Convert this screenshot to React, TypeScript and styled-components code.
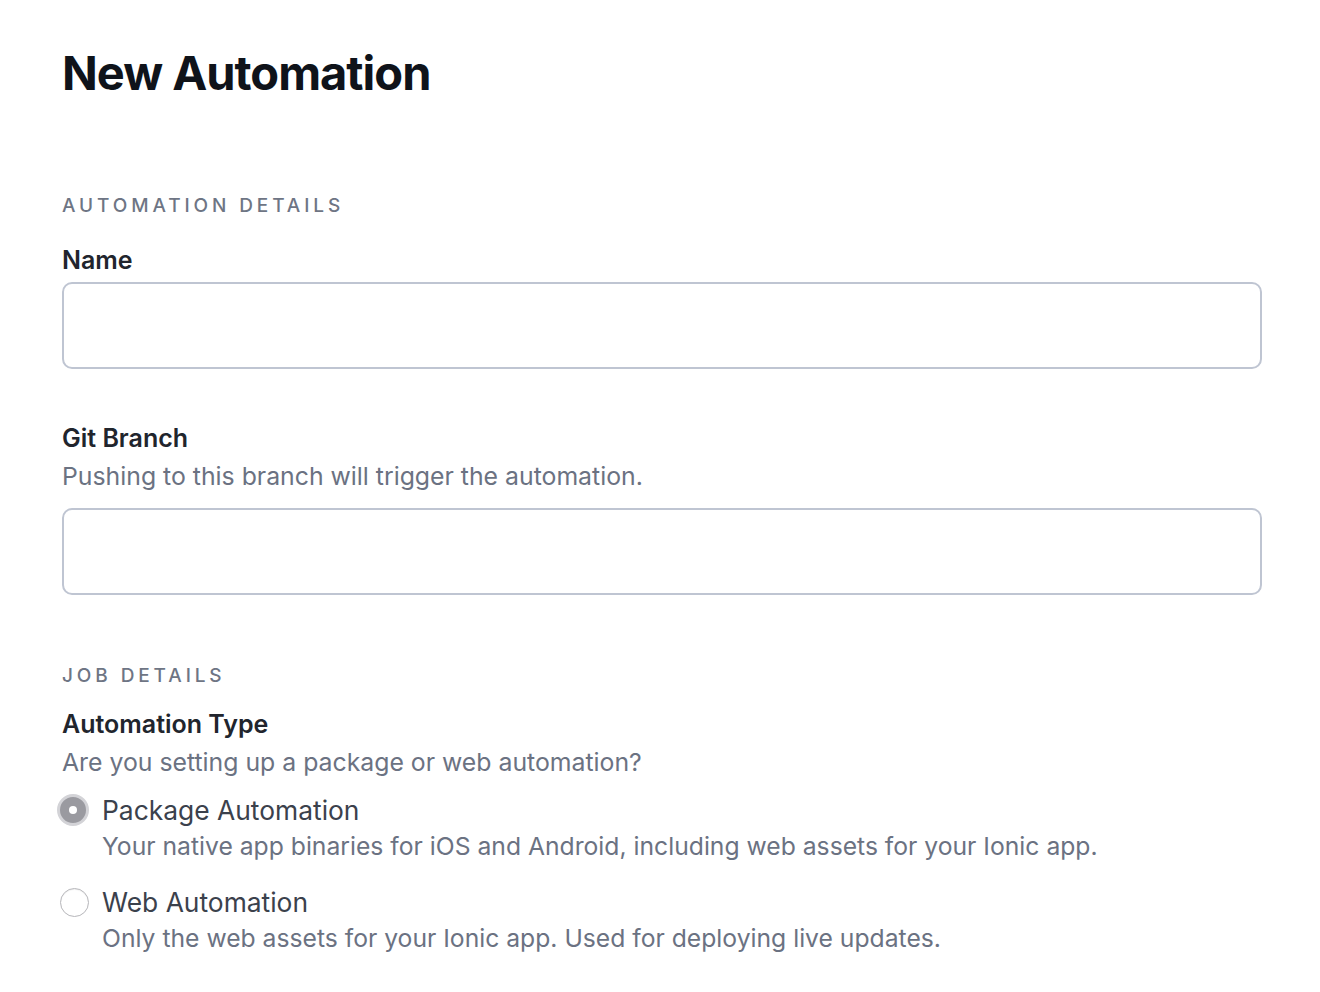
import React from "react";
import styled, { createGlobalStyle } from "styled-components";

const GlobalStyle = createGlobalStyle`
  body {
    margin: 0;
    background: #ffffff;
    font-family: Inter, "Noto Sans", sans-serif;
    -webkit-font-smoothing: antialiased;
  }
`;

const Page = styled.div`
  padding: 40px 58px 0 62px;
  width: 1200px;
`;

const Title = styled.h1`
  margin: 0 0 86px;
  font-size: 47px;
  line-height: 66px;
  font-weight: 700;
  letter-spacing: -1px;
  color: #0f131a;
`;

const SectionLabel = styled.h2<{ space?: number }>`
  margin: 0 0 ${({ space }) => space ?? 17}px;
  font-size: 19px;
  line-height: 28px;
  font-weight: 500;
  letter-spacing: 3.9px;
  text-transform: uppercase;
  color: #6e7584;
`;

const Field = styled.div<{ gap?: number }>`
  display: flex;
  flex-direction: column;
  margin-bottom: ${({ gap }) => gap ?? 0}px;
`;

const Label = styled.label`
  font-size: 25px;
  line-height: 34px;
  font-weight: 600;
  color: #21252d;
`;

const Help = styled.p`
  margin: 5px 0 0;
  font-size: 24.8px;
  line-height: 32px;
  color: #6b7282;
`;

const Input = styled.input<{ top?: number }>`
  box-sizing: border-box;
  width: 100%;
  height: 87px;
  margin-top: ${({ top }) => top ?? 5}px;
  border: 2px solid #bfc5d2;
  border-radius: 10px;
  background: #fff;
  font: inherit;
  font-size: 24px;
  padding: 0 20px;
  outline: none;
`;

const Options = styled.div`
  display: flex;
  flex-direction: column;
  gap: 22px;
  margin-top: 14px;
`;

const Option = styled.label`
  display: grid;
  grid-template-columns: 30px 1fr;
  column-gap: 10px;
  align-items: start;
`;

const Radio = styled.span<{ checked?: boolean }>`
  box-sizing: border-box;
  width: ${({ checked }) => (checked ? 32 : 29)}px;
  height: ${({ checked }) => (checked ? 32 : 29)}px;
  margin-top: ${({ checked }) => (checked ? 2 : 3.5)}px;
  margin-left: ${({ checked }) => (checked ? -5 : -2.5)}px;
  border-radius: 50%;
  display: flex;
  align-items: center;
  justify-content: center;
  background: ${({ checked }) => (checked ? "#9a9aa0" : "#ffffff")};
  border: ${({ checked }) =>
    checked ? "3.5px solid #d3d3d7" : "1.5px solid #b6b6ba"};
  box-shadow: ${({ checked }) =>
    checked ? "none" : "inset 0 1px 1px rgba(0,0,0,0.06)"};

  &::after {
    content: "";
    display: ${({ checked }) => (checked ? "block" : "none")};
    width: 8px;
    height: 8px;
    border-radius: 50%;
    background: #ffffff;
  }
`;

const OptionText = styled.div`
  display: flex;
  flex-direction: column;
`;

const OptionTitle = styled.span`
  font-size: 26.4px;
  line-height: 36px;
  color: #3b414c;
`;

const OptionDesc = styled.span`
  margin-top: 2px;
  font-size: 24.7px;
  line-height: 32px;
  color: #6b7282;
`;

const options = [
  {
    title: "Package Automation",
    desc: "Your native app binaries for iOS and Android, including web assets for your Ionic app.",
    checked: true,
  },
  {
    title: "Web Automation",
    desc: "Only the web assets for your Ionic app. Used for deploying live updates.",
    checked: false,
  },
];

export default function App() {
  return (
    <>
      <GlobalStyle />
      <Page>
        <Title>New Automation</Title>

        <SectionLabel space={23}>Automation Details</SectionLabel>
        <Field gap={52}>
          <Label>Name</Label>
          <Input />
        </Field>

        <Field gap={67}>
          <Label>Git Branch</Label>
          <Help>Pushing to this branch will trigger the automation.</Help>
          <Input top={16} />
        </Field>

        <SectionLabel>Job Details</SectionLabel>
        <Field>
          <Label>Automation Type</Label>
          <Help>Are you setting up a package or web automation?</Help>
          <Options>
            {options.map((o) => (
              <Option key={o.title}>
                <Radio checked={o.checked} />
                <OptionText>
                  <OptionTitle>{o.title}</OptionTitle>
                  <OptionDesc>{o.desc}</OptionDesc>
                </OptionText>
              </Option>
            ))}
          </Options>
        </Field>
      </Page>
    </>
  );
}
